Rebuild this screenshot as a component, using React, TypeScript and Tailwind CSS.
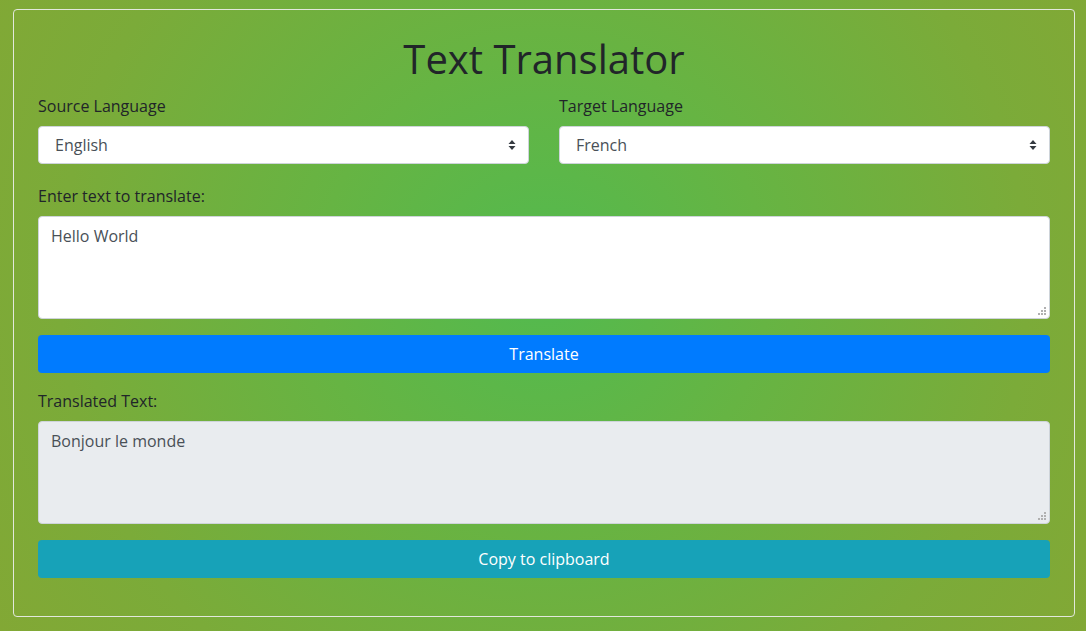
import React, { useState } from 'react';

const SelectArrows: React.FC = () => (
  <svg width="8" height="12" viewBox="0 0 8 12" className="pointer-events-none">
    <path d="M4 1 L7.5 5 H0.5 Z" fill="#343a40" />
    <path d="M4 11 L7.5 7 H0.5 Z" fill="#343a40" />
  </svg>
);

const Grip: React.FC = () => (
  <svg width="9" height="9" viewBox="0 0 9 9" className="absolute right-[3px] bottom-[3px] pointer-events-none">
    <rect x="6" y="0" width="2" height="2" fill="#b0b0b0" />
    <rect x="3" y="3" width="2" height="2" fill="#b0b0b0" />
    <rect x="6" y="3" width="2" height="2" fill="#b0b0b0" />
    <rect x="0" y="6" width="2" height="2" fill="#b0b0b0" />
    <rect x="3" y="6" width="2" height="2" fill="#b0b0b0" />
    <rect x="6" y="6" width="2" height="2" fill="#b0b0b0" />
  </svg>
);

const LangSelect: React.FC<{ label: string; value: string }> = ({ label, value }) => (
  <div className="flex-1">
    <label className="block mb-2 leading-6 text-[#212529]">{label}</label>
    <div className="relative h-[38px] bg-white border border-[#ced4da] rounded flex items-center pl-[16px] pr-3">
      <span className="flex-1 text-[#495057]">{value}</span>
      <SelectArrows />
    </div>
  </div>
);

export default function App() {
  const [source] = useState('Hello World');
  const [translated] = useState('Bonjour le monde');

  return (
    <div
      className="min-h-screen w-full pt-[9px] pl-[13px] pr-[11px] bg-[radial-gradient(circle_at_50%_45%,#52ba4f_0%,#66b443_35%,#7bab39_75%,#82a835_100%)]"
      style={{ fontFamily: '"Open Sans", "Noto Sans", sans-serif' }}
    >
      <div className="border border-[#e2e8dc] rounded px-6 pt-[25px] pb-[38px] text-base">
        <h1 className="text-center text-[40px] leading-[48px] text-[#212529] mb-[11px]">Text Translator</h1>

        {/* Language pickers */}
        <div className="flex gap-[30px] mb-[20px]">
          <LangSelect label="Source Language" value="English" />
          <LangSelect label="Target Language" value="French" />
        </div>

        <label className="block mb-2 leading-6 text-[#212529]">Enter text to translate:</label>
        <div className="relative mb-4">
          <textarea
            defaultValue={source}
            className="block w-full h-[103px] resize-none bg-white border border-[#ced4da] rounded px-3 py-[7px] leading-6 text-[#495057] outline-none"
          />
          <Grip />
        </div>

        <button className="w-full h-[38px] bg-[#007bff] text-white rounded mb-4">Translate</button>

        <label className="block mb-2 leading-6 text-[#212529]">Translated Text:</label>
        <div className="relative mb-4">
          <textarea
            readOnly
            value={translated}
            className="block w-full h-[103px] resize-none bg-[#e9ecef] border border-[#ced4da] rounded px-3 py-[7px] leading-6 text-[#495057] outline-none"
          />
          <Grip />
        </div>

        <button className="w-full h-[38px] bg-[#17a2b8] text-white rounded">Copy to clipboard</button>
      </div>
    </div>
  );
}
